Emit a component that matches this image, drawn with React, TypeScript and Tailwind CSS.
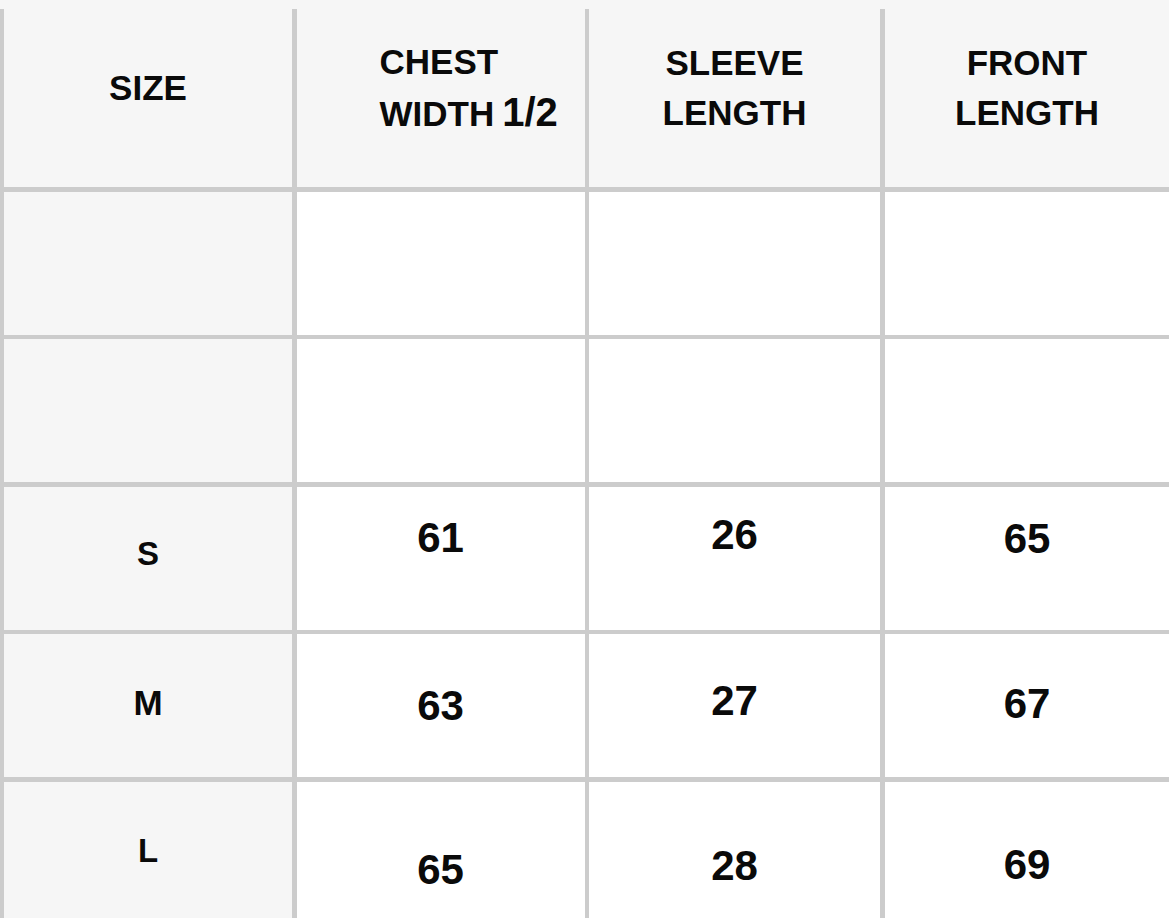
type Cell = { text: string; shift: string }

const headers = [
  { lines: ['SIZE'] },
  { lines: ['CHEST', 'WIDTH'], extra: '1/2' },
  { lines: ['SLEEVE', 'LENGTH'] },
  { lines: ['FRONT', 'LENGTH'] },
]

// each row: size label + three measurements, with the small vertical offsets seen in the chart
const rows: Cell[][] = [
  [
    { text: '', shift: '' },
    { text: '', shift: '' },
    { text: '', shift: '' },
    { text: '', shift: '' },
  ],
  [
    { text: '', shift: '' },
    { text: '', shift: '' },
    { text: '', shift: '' },
    { text: '', shift: '' },
  ],
  [
    { text: 'S', shift: 'pb-[8px]' },
    { text: '61', shift: 'pb-[42px]' },
    { text: '26', shift: 'pb-[48px]' },
    { text: '65', shift: 'pb-[40px]' },
  ],
  [
    { text: 'M', shift: 'pb-[4px] text-[35px]' },
    { text: '63', shift: 'pb-0' },
    { text: '27', shift: 'pb-[10px]' },
    { text: '67', shift: 'pb-[4px]' },
  ],
  [
    { text: 'L', shift: 'pb-[4px]' },
    { text: '65', shift: 'pt-[32px]' },
    { text: '28', shift: 'pt-[24px]' },
    { text: '69', shift: 'pt-[22px]' },
  ],
]

export default function App() {
  return (
    <div
      className="h-[918px] w-[1169px] overflow-hidden bg-[#f6f6f6] pt-[9px] text-[#0a0a0a]"
      style={{ fontFamily: '"Liberation Sans", Arial, sans-serif' }}
    >
      <div className="grid grid-cols-[288px_288px_291px_285px] grid-rows-[178px_repeat(5,143px)] gap-[4.5px] bg-[#cccccc] pl-[4px] pr-[1px]">
        {/* 헤더 */}
        {headers.map((h, i) =>
          i === 1 ? (
            <div key={i} className="flex items-center justify-start bg-[#f6f6f6] pb-[20px] pl-[83px]">
              <div className="text-[35px] font-bold leading-[50px]">
                <div>{h.lines[0]}</div>
                <div className="flex items-baseline">
                  <span>{h.lines[1]}</span>
                  <span className="ml-[8px] text-[40px]">{h.extra}</span>
                </div>
              </div>
            </div>
          ) : (
            <div key={i} className="flex items-center justify-center bg-[#f6f6f6] pb-[20px]">
              <div className="text-center text-[35px] font-bold leading-[50px]">
                {h.lines.map((l) => (
                  <div key={l}>{l}</div>
                ))}
              </div>
            </div>
          )
        )}

        {/* 본문 */}
        {rows.map((row, r) =>
          row.map((cell, c) => (
            <div
              key={`${r}-${c}`}
              className={`flex items-center justify-center font-bold ${
                c === 0 ? 'bg-[#f6f6f6] text-[33px]' : 'bg-white text-[42px]'
              } ${cell.shift}`}
            >
              {cell.text}
            </div>
          ))
        )}
      </div>
    </div>
  )
}
